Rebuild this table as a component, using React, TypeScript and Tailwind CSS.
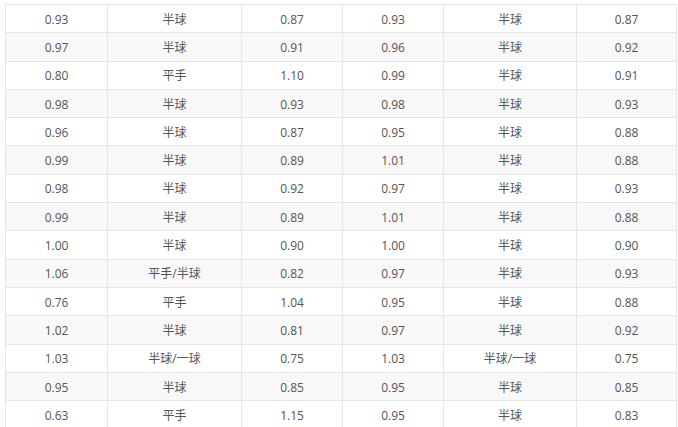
import React from 'react';

const rows: string[][] = [
   ['0.93', '半球', '0.87', '0.93', '半球', '0.87'],
   ['0.97', '半球', '0.91', '0.96', '半球', '0.92'],
   ['0.80', '平手', '1.10', '0.99', '半球', '0.91'],
   ['0.98', '半球', '0.93', '0.98', '半球', '0.93'],
   ['0.96', '半球', '0.87', '0.95', '半球', '0.88'],
   ['0.99', '半球', '0.89', '1.01', '半球', '0.88'],
   ['0.98', '半球', '0.92', '0.97', '半球', '0.93'],
   ['0.99', '半球', '0.89', '1.01', '半球', '0.88'],
   ['1.00', '半球', '0.90', '1.00', '半球', '0.90'],
   ['1.06', '平手/半球', '0.82', '0.97', '半球', '0.93'],
   ['0.76', '平手', '1.04', '0.95', '半球', '0.88'],
   ['1.02', '半球', '0.81', '0.97', '半球', '0.92'],
   ['1.03', '半球/一球', '0.75', '1.03', '半球/一球', '0.75'],
   ['0.95', '半球', '0.85', '0.95', '半球', '0.85'],
   ['0.63', '平手', '1.15', '0.95', '半球', '0.83'],
];

const App: React.FC = () => {
   return (
      <div className="w-[678px] h-[427px] overflow-hidden bg-white pt-[4px] pl-[5px] font-['Open_Sans','Noto_Sans_CJK_SC',sans-serif]">
         <table className="table-fixed border-collapse w-[671px] text-[12px] text-[#555]">
            <colgroup>
               <col className="w-[102px]" />
               <col className="w-[134px]" />
               <col className="w-[101px]" />
               <col className="w-[101px]" />
               <col className="w-[133px]" />
               <col className="w-[100px]" />
            </colgroup>
            <tbody>
               {rows.map((r, i) => (
                  <tr key={i} className={i % 2 === 1 ? 'bg-[#f8f8f8]' : 'bg-white'}>
                     {r.map((c, j) => (
                        <td key={j} className="h-[28.3px] px-0 pt-[2px] pb-0 text-center border border-[#e6e6e6]">
                           {c}
                        </td>
                     ))}
                  </tr>
               ))}
            </tbody>
         </table>
      </div>
   );
};

export default App;
